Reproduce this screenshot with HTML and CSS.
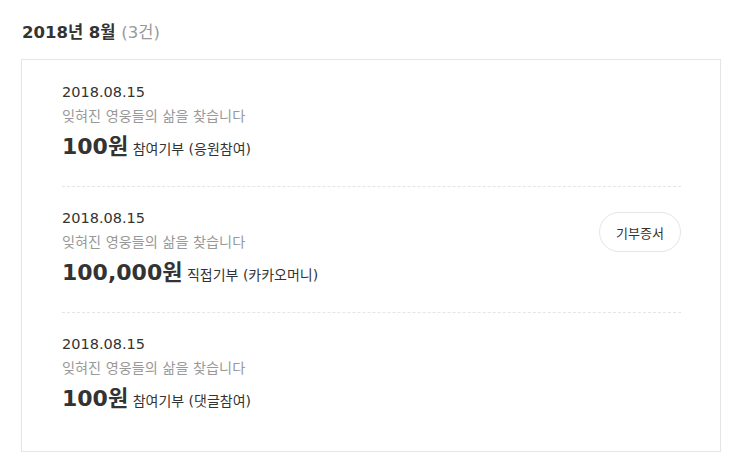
FILE: index.html
```html
<!DOCTYPE html>
<html lang="ko">
<head>
<meta charset="utf-8">
<link rel="stylesheet" href="styles.css">
</head>
<body>
<section class="month">
  <h2 class="month-title">2018년 8월 <span class="count">(3건)</span></h2>
  <ul class="list">
    <li class="item">
      <div class="info">
        <div class="date">2018.08.15</div>
        <div class="name">잊혀진 영웅들의 삶을 찾습니다</div>
        <div class="amount"><strong>100원</strong> <span class="type">참여기부 (응원참여)</span></div>
      </div>
    </li>
    <li class="item">
      <div class="info">
        <div class="date">2018.08.15</div>
        <div class="name">잊혀진 영웅들의 삶을 찾습니다</div>
        <div class="amount"><strong>100,000원</strong> <span class="type">직접기부 (카카오머니)</span></div>
      </div>
      <button class="receipt">기부증서</button>
    </li>
    <li class="item">
      <div class="info">
        <div class="date">2018.08.15</div>
        <div class="name">잊혀진 영웅들의 삶을 찾습니다</div>
        <div class="amount"><strong>100원</strong> <span class="type">참여기부 (댓글참여)</span></div>
      </div>
    </li>
  </ul>
</section>
</body>
</html>
```

FILE: styles.css
```css
* { box-sizing: border-box; }
html, body { margin: 0; padding: 0; background: #fff; }
body {
  font-family: "DejaVu Sans", "Noto Sans CJK KR", sans-serif;
  color: #333;
}
.month { padding: 20px 24px 0 21px; width: 745px; }
.month-title {
  margin: 0 0 13px 1px;
  font-size: 16.5px;
  line-height: 26px;
  font-weight: 700;
  color: #333;
}
.count { font-weight: 400; color: #999; }
.list {
  list-style: none;
  margin: 0;
  padding: 0 39px 13px 40px;
  width: 700px;
  border: 1px solid #e5e5e5;
}
.item {
  display: flex;
  align-items: flex-start;
  justify-content: space-between;
  padding: 19px 0 20px 0;
  border-bottom: 1px dashed #e5e5e5;
}
.item:first-child { padding-top: 20px; }
.item:last-child { border-bottom: none; }
.date { font-size: 14.5px; line-height: 24px; color: #333; }
.name { font-size: 14.2px; line-height: 24px; color: #999; }
.amount { font-size: 14px; line-height: 34px; padding-top: 4px; color: #333; }
.amount strong { font-size: 22px; line-height: 1; font-weight: 700; }
.receipt {
  width: 82px;
  height: 40px;
  margin-top: 6px;
  border: 1px solid #e5e5e5;
  border-radius: 20px;
  background: #fff;
  font-family: "Noto Sans CJK KR", sans-serif;
  font-size: 13px;
  color: #333;
  cursor: pointer;
}
```
